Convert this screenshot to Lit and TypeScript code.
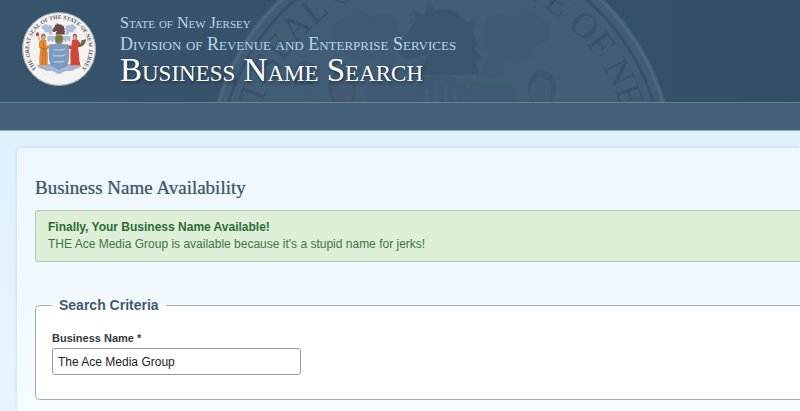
import { LitElement, html, svg, css } from "lit";
import { customElement, property, state } from "lit/decorators.js";

@customElement("state-seal")
class StateSeal extends LitElement {
  @property({ type: Boolean, reflect: true }) muted = false;

  static styles = css`
    :host { display: block; }
    svg { display: block; width: 100%; height: auto; overflow: visible; }
    .disc { fill: #f4f3f2; }
    .ring { fill: none; stroke: #9aa1ac; stroke-width: 6; }
    .inner { fill: none; stroke: none; }
    .motto { font-family: "Liberation Serif", serif; font-size: 36px; font-weight: 700; fill: #5b5b63; }
    .cloud { fill: #a9bfdc; }
    .drape { fill: #a3b3d3; }
    .shield { fill: #7d9ac2; stroke: #6583ab; stroke-width: 4; }
    .plough { fill: none; stroke: #b5cbe3; stroke-width: 8; }
    .horse { fill: #6b4a45; }
    .helmet { fill: #8a8a52; }
    .bars { fill: none; stroke: #5e6238; stroke-width: 4; }
    .left-robe { fill: #e58a35; }
    .right-robe { fill: #d8453c; }
    .fold { fill: none; stroke: #a8552c; stroke-width: 4; }
    .skin { fill: #e0a988; }
    .hair { fill: #86503a; }
    .cap { fill: #d0463f; }
    .horn { fill: #6d6a4a; }

    :host([muted]) .disc { fill: #415d74; }
    :host([muted]) .ring { stroke: #4b667d; stroke-width: 3; }
    :host([muted]) .inner { stroke: #35526a; stroke-width: 3; }
    :host([muted]) .motto { fill: #36536b; font-weight: 400; }
    :host([muted]) .cloud { fill: #3f5a72; }
    :host([muted]) .drape { fill: #3f5a72; }
    :host([muted]) .shield { fill: #3f5a72; stroke: #3b576f; }
    :host([muted]) .plough { stroke: #415d74; }
    :host([muted]) .horse { fill: #3a556c; }
    :host([muted]) .helmet { fill: #3e5971; }
    :host([muted]) .bars { stroke: #465a74; }
    :host([muted]) .left-robe,
    :host([muted]) .right-robe { fill: #3f5a72; }
    :host([muted]) .fold { stroke: #3c576f; }
    :host([muted]) .skin { fill: #435b72; }
    :host([muted]) .hair { fill: #3c566d; }
    :host([muted]) .cap,
    :host([muted]) .horn { fill: #3b566e; }
  `;

  private scroll() {
    return svg`
      <path class="cloud" d="M-40 -92 C-60 -84 -72 -100 -58 -110 C-78 -98 -98 -108 -94 -122 C-114 -124 -114 -144 -98 -148
        C-92 -162 -72 -158 -70 -148 C-56 -158 -40 -150 -44 -138 C-36 -128 -40 -116 -48 -114 Z"/>
      <path class="cloud" d="M-30 -84 C-52 -80 -66 -88 -76 -76 C-70 -64 -78 -50 -64 -44 C-60 -60 -44 -54 -44 -40
        C-34 -46 -30 -62 -20 -60 Z"/>`;
  }

  render() {
    return html`
      <svg viewBox="-235 -235 470 470" aria-hidden="true">
        <defs><path id="arc" d="M0 190 A190 190 0 0 1 0 -190 A190 190 0 0 1 0 190"/></defs>
        <circle class="disc" r="234"/>
        <circle class="ring" r="231"/>
        <circle class="inner" r="222"/>
        <text class="motto"><textPath href="#arc" startOffset="50%" text-anchor="middle">THE GREAT SEAL OF THE STATE OF NEW JERSEY</textPath></text>
        ${this.scroll()}
        <g transform="scale(-1 1)">${this.scroll()}</g>
        <path class="horse" d="M-22 -92 C-20 -100 -16 -108 -12 -114 C-20 -112 -28 -106 -38 -108 C-46 -114 -42 -124 -34 -134
          L-24 -148 L-28 -156 L-17 -153 L-13 -166 L-6 -157 C8 -160 20 -154 26 -144 L34 -146 L32 -136 L37 -122 L33 -118
          L42 -108 L35 -106 L38 -92 Z"/>
        <path class="helmet" d="M-26 -48 V-74 C-26 -98 26 -98 26 -74 V-48 L14 -34 H-14 Z"/>
        <path class="bars" d="M-14 -78 V-46 M-5 -82 V-42 M5 -82 V-42 M14 -78 V-46"/>
        <path class="drape" d="M-142 104 C-122 92 -104 104 -78 96 L78 96 C104 104 122 92 142 104 C134 122 116 126 100 128
          C78 150 44 128 22 150 C10 162 -10 162 -22 150 C-44 128 -78 150 -100 128 C-116 126 -134 122 -142 104 Z"/>
        <path class="left-robe" d="M-112 -62 C-126 -54 -132 -34 -126 -14 L-118 0 C-126 36 -126 72 -124 104 H-72
          C-72 70 -66 34 -76 4 L-58 -8 L-64 -24 L-78 -20 L-82 -58 Z"/>
        <path class="fold" d="M-102 -48 C-92 -18 -108 20 -106 100 M-90 -10 C-84 24 -90 66 -86 100 M-124 -10 L-78 2"/>
        <path class="right-robe" d="M112 -62 C130 -52 140 -34 134 -16 L120 -8 C130 34 126 72 136 104 H72
          C78 72 66 34 76 4 L58 -8 L64 -24 L78 -20 L84 -58 Z"/>
        <path class="fold" d="M102 -48 C92 -18 108 20 106 100 M90 -10 C84 24 90 66 86 100 M120 -8 L82 12"/>
        <ellipse class="hair" cx="-99" cy="-79" rx="14" ry="18"/>
        <ellipse class="skin" cx="-98" cy="-75" rx="10" ry="14"/>
        <ellipse class="hair" cx="101" cy="-79" rx="14" ry="18"/>
        <ellipse class="skin" cx="100" cy="-75" rx="10" ry="14"/>
        <path class="skin" d="M-124 -48 L-138 -76 L-132 -82 L-114 -56 Z M-104 102 h12 v14 h-16 Z M96 102 h12 l4 14 h-16 Z"/>
        <path class="cap" d="M-146 -82 C-152 -98 -140 -112 -130 -104 C-122 -98 -128 -90 -128 -82 Z"/>
        <path class="horn" d="M118 -34 C130 -26 142 -36 142 -56 L172 -62 C172 -38 152 -10 126 -14 Z"/>
        <path class="shield" d="M-58 -28 C-36 -22 -22 -34 0 -34 C22 -34 36 -22 58 -28 C64 20 66 72 48 104
          C32 116 14 118 0 130 C-14 118 -32 116 -48 104 C-66 72 -64 20 -58 -28 Z"/>
        <path class="plough" d="M-36 6 H26 L38 -2 M-38 44 H24 L38 34 M-34 82 H22 L34 74"/>
      </svg>`;
  }
}

@customElement("app-root")
class AppRoot extends LitElement {
  @state() private businessName = "The Ace Media Group";

  static styles = css`
    :host {
      display: flex;
      flex-direction: column;
      min-height: 100vh;
      overflow: hidden;
      font-family: "Liberation Sans", Arial, sans-serif;
      font-size: 12px;
      background: linear-gradient(#d9f0fb, #e8f5ff);
    }
    * { box-sizing: border-box; }
    .banner {
      position: relative;
      overflow: hidden;
      display: flex;
      gap: 24px;
      padding: 12px 22px 16px;
      background: linear-gradient(90deg, #36546c, #365269 50%, #315066);
    }
    .watermark { position: absolute; left: 206px; top: -68px; width: 470px; }
    .seal { flex: none; width: 74px; }
    .titles {
      position: relative;
      font-family: "Liberation Serif", "Times New Roman", serif;
      font-variant: small-caps;
      color: #b5d5eb;
      white-space: nowrap;
    }
    .titles p, .titles h1 { margin: 0; font-weight: 400; }
    .state { font-size: 16px; line-height: 22px; }
    .division { font-size: 18px; line-height: 20px; }
    .titles h1 {
      font-size: 33px;
      line-height: 32px;
      color: #fff;
      text-shadow: 1px 2px 3px #1d3346;
    }
    .menu {
      height: 29px;
      background: #446078;
      border-top: 1px solid #66819a;
      border-bottom: 1px solid #93abc0;
    }
    .card {
      flex: 1;
      margin: 17px 0 0 17px;
      padding: 28px 0 12px 18px;
      border-radius: 5px 0 0 0;
      background: linear-gradient(#eff7fe, #f5fbff);
      box-shadow: 0 0 4px #c3d9e8;
    }
    h2 {
      margin: 0 0 10px;
      font: 400 19px/24px "Liberation Serif", Georgia, serif;
      color: #43566b;
      text-shadow: 0 0 1px #8a99a8;
    }
    .notice {
      padding: 8px 12px;
      border: 1px solid #b3cbb0;
      border-right: 0;
      border-radius: 3px 0 0 3px;
      background: #ddefd7;
      color: #3f7446;
      line-height: 17px;
    }
    .notice strong { display: block; color: #2f6c35; }
    fieldset {
      margin: 35px 0 0;
      padding: 17px 16px 24px;
      border: 1px solid #a9adb1;
      border-right: 0;
      border-radius: 5px 0 0 5px;
      background: #fff;
      min-width: 0;
    }
    legend {
      padding: 0 7px;
      font-size: 14px;
      line-height: 16px;
      font-weight: 700;
      color: #3f5a72;
    }
    label {
      display: block;
      margin-bottom: 2px;
      font-size: 11px;
      line-height: 16px;
      font-weight: 700;
      color: #333a40;
    }
    input {
      display: block;
      width: 249px;
      max-width: 100%;
      height: 27px;
      padding: 0 5px;
      border: 1px solid #999;
      border-radius: 3px;
      background: #fff;
      font: 12px "Liberation Sans", Arial, sans-serif;
      color: #222;
    }
  `;

  render() {
    return html`
      <header class="banner">
        <state-seal class="watermark" muted></state-seal>
        <state-seal class="seal"></state-seal>
        <div class="titles">
          <p class="state">State of New Jersey</p>
          <p class="division">Division of Revenue and Enterprise Services</p>
          <h1>Business Name Search</h1>
        </div>
      </header>
      <nav class="menu"></nav>
      <main class="card">
        <h2>Business Name Availability</h2>
        <div class="notice" role="status">
          <strong>Finally, Your Business Name Available!</strong>
          THE Ace Media Group is available because it's a stupid name for jerks!
        </div>
        <fieldset>
          <legend>Search Criteria</legend>
          <label for="business-name">Business Name *</label>
          <input id="business-name" type="text" required .value=${this.businessName}
            @input=${(e: Event) => { this.businessName = (e.target as HTMLInputElement).value; }}>
        </fieldset>
      </main>`;
  }
}
